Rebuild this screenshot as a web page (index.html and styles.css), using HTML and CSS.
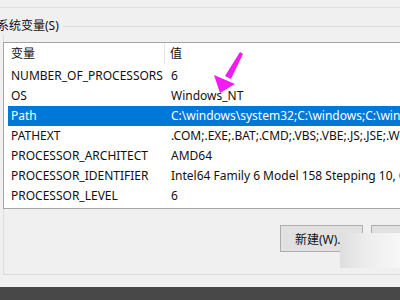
FILE: index.html
```html
<!DOCTYPE html>
<html lang="zh-CN">
<head>
  <meta charset="UTF-8">
  <title>系统变量</title>
  <link rel="stylesheet" href="styles.css">
</head>
<body>
  <div class="page">
    <div class="topbar"></div>
    <div class="legend">系统变量(S)</div>
    <div class="group">
      <div class="listview">
        <div class="header">
          <div class="hcell name">变量</div>
          <div class="hcell value">值</div>
        </div>
        <div class="row"><span class="name">NUMBER_OF_PROCESSORS</span><span class="value">6</span></div>
        <div class="row"><span class="name">OS</span><span class="value">Windows_NT</span></div>
        <div class="row selected"><span class="name">Path</span><span class="value">C:\windows\system32;C:\windows;C:\windows\System32\Wbem</span></div>
        <div class="row"><span class="name">PATHEXT</span><span class="value">.COM;.EXE;.BAT;.CMD;.VBS;.VBE;.JS;.JSE;.WSF;.WSH;.MSC</span></div>
        <div class="row"><span class="name">PROCESSOR_ARCHITECT</span><span class="value">AMD64</span></div>
        <div class="row"><span class="name">PROCESSOR_IDENTIFIER</span><span class="value">Intel64 Family 6 Model 158 Stepping 10, GenuineIntel</span></div>
        <div class="row"><span class="name">PROCESSOR_LEVEL</span><span class="value">6</span></div>
      </div>
      <div class="buttons">
        <button class="btn">新建(W)...</button>
        <button class="btn">编辑(I)...</button>
      </div>
    </div>
    <div class="gap"></div>
    <div class="taskbar"></div>
  </div>

  <!-- watermark smudge over the buttons -->
  <div class="smudge"></div>

  <svg class="arrow" width="400" height="300" viewBox="0 0 400 300">
    <polygon points="240,52 243,54 231,79 225,76" fill="#f01cf0"/>
    <polygon points="214,75 235,84 220,93" fill="#f01cf0"/>
  </svg>
</body>
</html>
```

FILE: styles.css
```css
* {
	box-sizing: border-box;
}

body {
	margin: 0;
	width: 400px;
	height: 300px;
	overflow: hidden;
	position: relative;
	background: #f0f0f0;
	font-family: "Noto Sans", "Noto Sans CJK SC", sans-serif;
	font-size: 12px;
	color: #111;
}

.page {
	display: flex;
	flex-direction: column;
	height: 300px;
}

.topbar {
	height: 8px;
	border-bottom: 1px solid #e0e0e0;
}

.legend {
	display: flex;
	align-items: center;
	gap: 4px;
	height: 16px;
	margin-top: 10px;
	margin-left: -3px;
	line-height: 16px;
	white-space: nowrap;

	&::after {
		content: "";
		flex: 1;
		border-top: 1px solid #dcdcdc;
	}
}

.group {
	margin-left: 3px;
	height: 241px;
	border-left: 1px solid #dcdcdc;
	border-bottom: 1px solid #dcdcdc;
	padding-top: 8px;
}

.listview {
	margin-left: -1px;
	width: 420px;
	height: 167px;
	background: #fff;
	border: 1px solid #a5a5a5;
	border-right: none;
	overflow: hidden;
	white-space: nowrap;
}

.header {
	display: flex;
	height: 21px;
	margin-bottom: 2px;
	line-height: 21px;

	.hcell.name {
		flex: none;
		width: 161px;
		padding-left: 7px;
		border-right: 1px solid #e5e5e5;
	}

	.hcell.value {
		padding-left: 5px;
	}
}

.row {
	display: flex;
	height: 20px;
	line-height: 20px;
	margin-left: 4px;
	overflow: hidden;

	.name {
		flex: none;
		width: 160px;
		padding-left: 3px;
		overflow: hidden;
	}

	.value {
		flex: none;
		padding-left: 3px;
	}

	&.selected {
		background: #0078d7;
		color: #fff;
	}
}

.buttons {
	display: flex;
	gap: 8px;
	margin-top: 16px;
	margin-left: 276px;
}

.btn {
	flex: none;
	width: 83px;
	height: 27px;
	padding: 0 0 0 14px;
	text-align: left;
	font: inherit;
	color: #111;
	background: #e1e1e1;
	border: 1px solid #adadad;
}

.gap {
	height: 12px;
}

.taskbar {
	flex: 1;
	background: #484848;
}

.smudge {
	position: absolute;
	left: 340px;
	top: 233px;
	width: 60px;
	height: 35px;
	background: linear-gradient(90deg, #dedede, #ececec 40%, #f7f7f7);
}

.arrow {
	position: absolute;
	left: 0;
	top: 0;
}
```
